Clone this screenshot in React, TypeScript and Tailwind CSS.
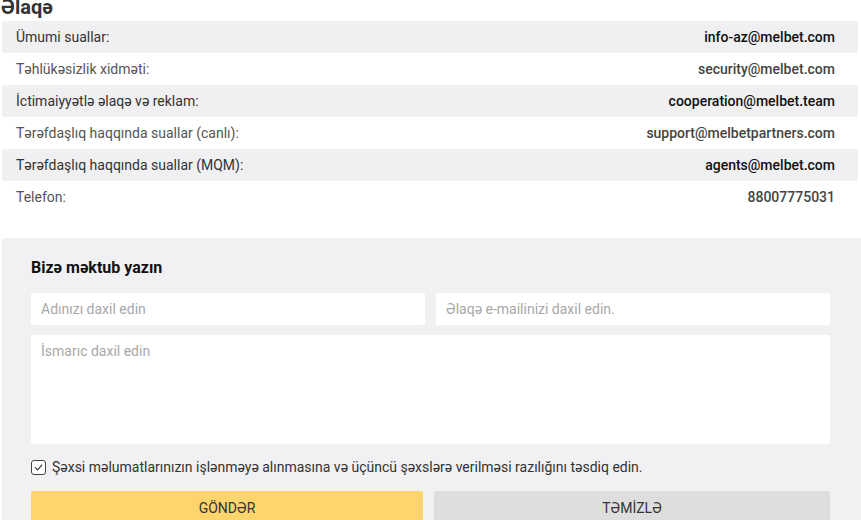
import { useState } from 'react';

const contacts = [
  { label: 'Ümumi suallar:', value: 'info-az@melbet.com' },
  { label: 'Təhlükəsizlik xidməti:', value: 'security@melbet.com' },
  { label: 'İctimaiyyətlə əlaqə və reklam:', value: 'cooperation@melbet.team' },
  { label: 'Tərəfdaşlıq haqqında suallar (canlı):', value: 'support@melbetpartners.com' },
  { label: 'Tərəfdaşlıq haqqında suallar (MQM):', value: 'agents@melbet.com' },
  { label: 'Telefon:', value: '88007775031' },
];

export default function App() {
  const [agree, setAgree] = useState(true);

  return (
    <div className="w-[861px] h-[520px] overflow-hidden bg-white font-['Roboto',sans-serif]">
      {/* Header */}
      <h1 className="h-[21px] pl-[1px] text-[20px] font-bold leading-[14px] text-[#333] overflow-visible">
        Əlaqə
      </h1>

      {/* Contacts */}
      <div className="pl-[2px] pr-[3px]">
        {contacts.map((c, i) => {
          const odd = i % 2 === 0;
          return (
            <div
              key={i}
              className={`flex h-[32px] items-center justify-between rounded-[3px] pl-[14px] pr-[23px] text-[14px] ${
                odd ? 'bg-[#f0f0f2]' : 'bg-white'
              }`}
            >
              <span className={odd ? 'text-[#333]' : 'text-[#555]'}>{c.label}</span>
              <span className={`font-medium ${odd ? 'text-[#111]' : 'text-[#444]'}`}>{c.value}</span>
            </div>
          );
        })}
      </div>

      {/* Form */}
      <div className="mt-[25px] ml-[2px] rounded-tl-[3px] bg-[#f1f1f3] pl-[29px] pr-[31px] pt-[20px] pb-[20px]">
        <h2 className="text-[16px] font-bold leading-[20px] text-[#111]">Bizə məktub yazın</h2>

        <div className="mt-[15px] grid grid-cols-2 gap-[11px]">
          <input
            placeholder="Adınızı daxil edin"
            className="h-[32px] rounded-[2px] bg-white px-[10px] text-[14px] text-[#333] outline-none placeholder:text-[#a8a8a8]"
          />
          <input
            placeholder="Əlaqə e-mailinizi daxil edin."
            className="h-[32px] rounded-[2px] bg-white px-[10px] text-[14px] text-[#333] outline-none placeholder:text-[#a8a8a8]"
          />
        </div>

        <textarea
          placeholder="İsmarıc daxil edin"
          className="mt-[10px] block h-[109px] w-full resize-none rounded-[2px] bg-white px-[10px] py-[6px] text-[14px] text-[#333] outline-none placeholder:text-[#a8a8a8]"
        />

        <label className="mt-[15px] flex items-center gap-[6px] text-[14px] leading-[16px] text-[#333]">
          <button
            type="button"
            onClick={() => setAgree(!agree)}
            className="flex h-[15px] w-[15px] items-center justify-center rounded-[3px] border border-[#444] bg-white"
          >
            {agree && (
              <svg width="11" height="11" viewBox="0 0 12 12" fill="none">
                <path d="M2.5 6.2 L5 8.6 L9.6 3.4" stroke="#333" strokeWidth="1.3" strokeLinecap="round" strokeLinejoin="round" />
              </svg>
            )}
          </button>
          Şəxsi məlumatlarınızın işlənməyə alınmasına və üçüncü şəxslərə verilməsi razılığını təsdiq edin.
        </label>

        <div className="mt-[16px] flex gap-[11px]">
          <button className="h-[34px] w-[392px] rounded-[2px] bg-[#fed46c] text-[14px] uppercase text-[#333]">
            GÖNDƏR
          </button>
          <button className="h-[34px] flex-1 rounded-[2px] bg-[#dedede] text-[14px] uppercase text-[#333]">
            TƏMİZLƏ
          </button>
        </div>
      </div>
    </div>
  );
}
